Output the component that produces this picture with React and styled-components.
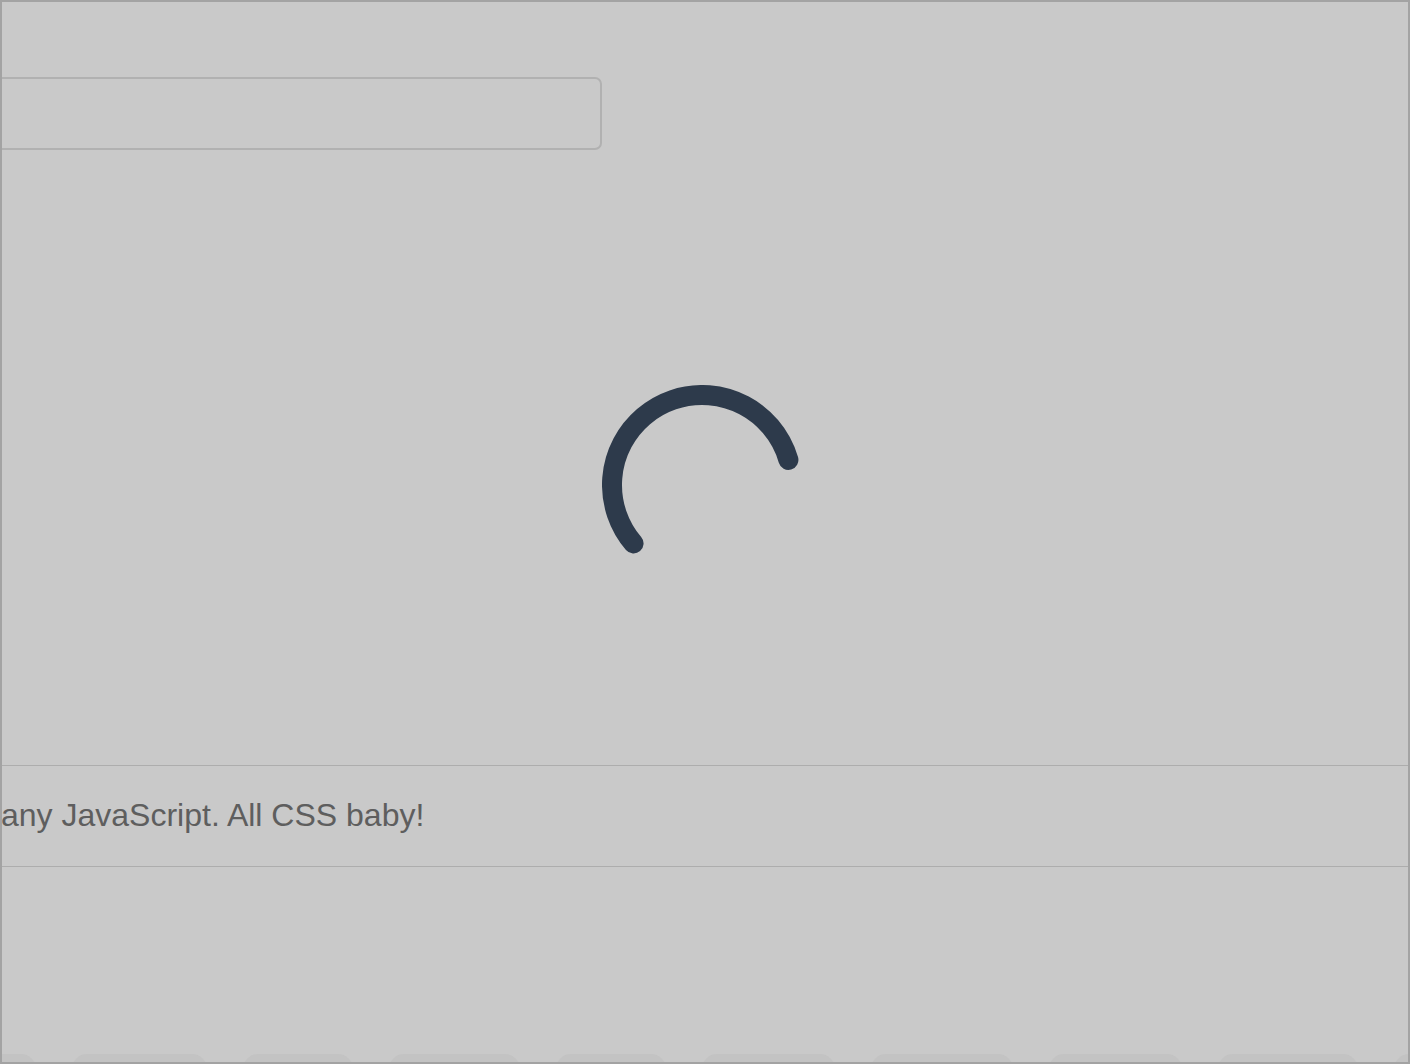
import React from 'react';
import styled, { createGlobalStyle } from 'styled-components';

const GlobalStyle = createGlobalStyle`
  html, body {
    margin: 0;
    padding: 0;
    background: #c9c9c9;
  }
  body {
    font-family: "Liberation Sans", Arial, sans-serif;
  }
`;

const Frame = styled.div`
  box-sizing: border-box;
  width: 1410px;
  height: 1064px;
  border: 2px solid #a3a3a3;
  background: #c9c9c9;
  overflow: hidden;
  display: flex;
  flex-direction: column;
`;

const SearchBox = styled.div`
  box-sizing: border-box;
  flex-shrink: 0;
  width: 640px;
  height: 73px;
  margin: 75px 0 0 -40px;
  border: 2px solid #b1b1b1;
  border-radius: 7px;
`;

const SpinnerWrap = styled.div`
  flex-shrink: 0;
  width: 200px;
  height: 200px;
  margin: 235px 0 0 600px;
`;

const Band = styled.div`
  flex-shrink: 0;
  height: 100px;
  margin-top: 180px;
  border-top: 1px solid #adadad;
  border-bottom: 1px solid #adadad;
  display: flex;
  align-items: center;
`;

const Caption = styled.p`
  margin: 0 0 0 -1px;
  font-size: 32px;
  line-height: 1;
  color: #5e5e5e;
  white-space: nowrap;
  padding-bottom: 3px;
`;

const TabRow = styled.div`
  flex-shrink: 0;
  display: flex;
  gap: 36px;
  margin: 187px 0 0 -102px;
`;

const Tab = styled.div`
  flex-shrink: 0;
  width: ${(p) => p.w}px;
  height: 40px;
  border-radius: 15px 15px 0 0;
  background: #c3c3c3;
`;

const tabWidths = [136, 135, 110, 131, 110, 133, 142, 133, 140, 120];

function Spinner() {
  const r = 90;
  const c = 2 * Math.PI * r;
  const arc = (204 / 360) * c;
  return (
    <svg width="200" height="200" viewBox="0 0 200 200">
      <circle
        cx="100"
        cy="100"
        r={r}
        fill="none"
        stroke="#2d3a4b"
        strokeWidth="20"
        strokeLinecap="round"
        strokeDasharray={`${arc} ${c}`}
        transform="rotate(139.5 100 100)"
      />
    </svg>
  );
}

export default function App() {
  return (
    <>
      <GlobalStyle />
      <Frame>
        <SearchBox />
        <SpinnerWrap>
          <Spinner />
        </SpinnerWrap>
        <Band>
          <Caption>any JavaScript. All CSS baby!</Caption>
        </Band>
        <TabRow>
          {tabWidths.map((w, i) => (
            <Tab key={i} w={w} />
          ))}
        </TabRow>
      </Frame>
    </>
  );
}
